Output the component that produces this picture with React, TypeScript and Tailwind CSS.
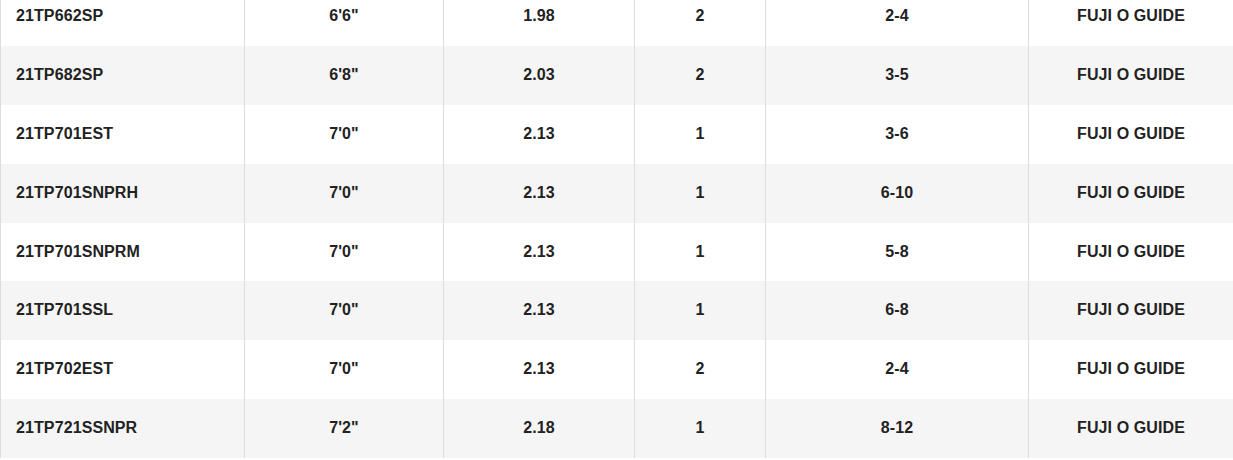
const rows = [
  ["21TP662SP", "6'6\"", "1.98", "2", "2-4", "FUJI O GUIDE"],
  ["21TP682SP", "6'8\"", "2.03", "2", "3-5", "FUJI O GUIDE"],
  ["21TP701EST", "7'0\"", "2.13", "1", "3-6", "FUJI O GUIDE"],
  ["21TP701SNPRH", "7'0\"", "2.13", "1", "6-10", "FUJI O GUIDE"],
  ["21TP701SNPRM", "7'0\"", "2.13", "1", "5-8", "FUJI O GUIDE"],
  ["21TP701SSL", "7'0\"", "2.13", "1", "6-8", "FUJI O GUIDE"],
  ["21TP702EST", "7'0\"", "2.13", "2", "2-4", "FUJI O GUIDE"],
  ["21TP721SSNPR", "7'2\"", "2.18", "1", "8-12", "FUJI O GUIDE"],
];

const widths = ["w-[244px]", "w-[199px]", "w-[191px]", "w-[131px]", "w-[263px]", "w-[205px]"];

export default function App() {
  return (
    <div className="h-[460px] overflow-hidden bg-white font-['Liberation_Sans',Arial,sans-serif]">
      <table className="mt-[-12.86px] w-[1233px] table-fixed border-collapse text-[16px] font-bold tracking-[0.1px] text-[#222]">
        <colgroup>
          {widths.map((w, i) => (
            <col key={i} className={w} />
          ))}
        </colgroup>
        <tbody>
          {rows.map((r, i) => (
            <tr key={r[0]} className={i % 2 === 1 ? "bg-[#f5f5f5]" : "bg-white"}>
              {r.map((cell, j) => (
                <td
                  key={j}
                  className={`h-[58.86px] border-x border-[#dddddd] p-0 pb-[1px] align-middle ${
                    j === 0 ? "pl-[15px] text-left" : "text-center"
                  }`}
                >
                  {cell}
                </td>
              ))}
            </tr>
          ))}
        </tbody>
      </table>
    </div>
  );
}
